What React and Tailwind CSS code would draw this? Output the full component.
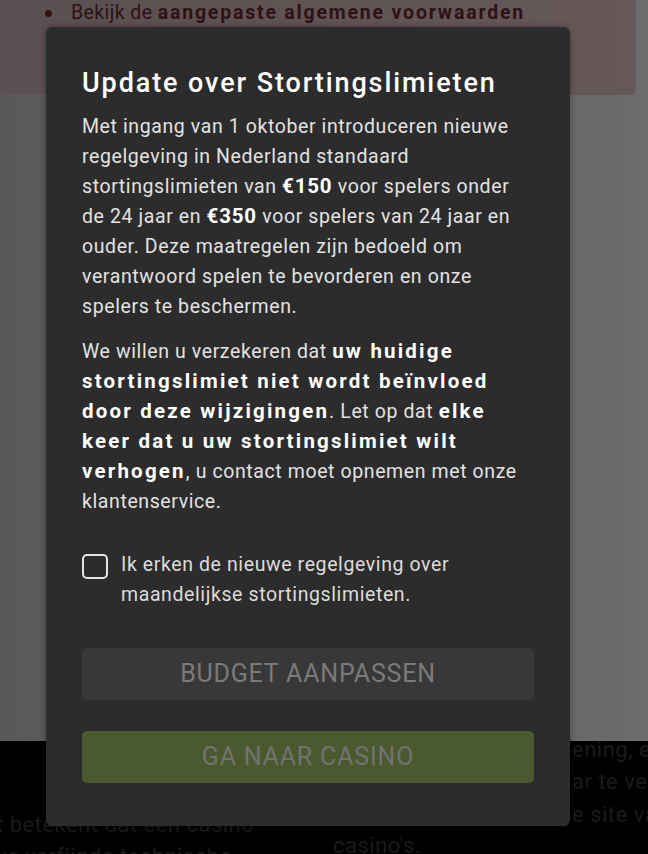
import { useState } from "react";

export default function App() {
  const [checked, setChecked] = useState(false);

  return (
    <div
      className="relative w-full h-[854px] overflow-hidden bg-[#5c5c5c]"
      style={{ fontFamily: "Roboto, 'Liberation Sans', sans-serif" }}
    >
      {/* dimmed page behind the modal */}
      <div className="flex flex-col h-full">
        <div className="h-[741px] bg-gradient-to-r from-[#595959] via-[#5e5e5e] to-[#6c6c6c]">
          <div className="w-[636px] h-[95px] bg-gradient-to-r from-[#5a4f50] to-[#665859] rounded-b-md border-r border-b border-[#6a5758]">
            <ul className="pl-[45px] pt-[1px]">
              <li className="flex items-center gap-[19px] text-[19.5px] leading-[24px] tracking-[0.4px] text-[#2e1216]">
                <span className="w-[7px] h-[7px] rounded-full bg-[#2e1216]" />
                <span>
                  Bekijk de{" "}
                  <b className="font-bold tracking-[1.8px]">
                    aangepaste algemene voorwaarden
                  </b>
                </span>
              </li>
            </ul>
          </div>
        </div>
        <div className="flex-1 bg-black text-[#1a1a1a] text-[22px] leading-[32px] tracking-[0.5px] relative">
          <div className="absolute left-[572px] top-[-7px] whitespace-nowrap">
            <p>ening, e</p>
            <p>ar te ve</p>
            <p className="mt-[1px]">e site va</p>
          </div>
          <div className="absolute left-[-4px] top-[68px] whitespace-nowrap">
            <p>t betekent dat een casino</p>
            <p>ve verfijnde technische</p>
          </div>
          <p className="absolute left-[333px] top-[89px]">casino's.</p>
        </div>
      </div>

      {/* modal */}
      <div className="absolute left-[46px] top-[27px] w-[524px] h-[799px] bg-[#2c2c2c] rounded-md shadow-[0_0_6px_rgba(0,0,0,0.35)] px-[36px] pt-[38px]">
        <h2 className="text-[27px] leading-[36px] font-medium tracking-[1.9px] text-white whitespace-nowrap">
          Update over Stortingslimieten
        </h2>
        <p className="mt-[11px] text-[19.5px] leading-[30px] tracking-[0.6px] text-[#e2e2e2] whitespace-nowrap">
          Met ingang van 1 oktober introduceren nieuwe
          <br />
          regelgeving in Nederland standaard
          <br />
          stortingslimieten van{" "}
          <b className="text-white font-bold text-[20.5px] leading-[20px] tracking-[0.8px]">
            €150
          </b>{" "}
          voor spelers onder
          <br />
          de 24 jaar en{" "}
          <b className="text-white font-bold text-[20.5px] leading-[20px] tracking-[0.8px]">
            €350
          </b>{" "}
          voor spelers van 24 jaar en
          <br />
          ouder. Deze maatregelen zijn bedoeld om
          <br />
          verantwoord spelen te bevorderen en onze
          <br />
          spelers te beschermen.
        </p>
        <p className="mt-[15px] text-[19.5px] leading-[30px] tracking-[0.6px] text-[#e2e2e2] whitespace-nowrap">
          We willen u verzekeren dat{" "}
          <b className="text-white font-bold text-[20.5px] leading-[20px] tracking-[2.2px]">
            uw huidige
          </b>
          <br />
          <b className="text-white font-bold text-[20.5px] leading-[20px] tracking-[2.2px]">
            stortingslimiet niet wordt beïnvloed
          </b>
          <br />
          <b className="text-white font-bold text-[20.5px] leading-[20px] tracking-[2.2px]">
            door deze wijzigingen
          </b>
          . Let op dat{" "}
          <b className="text-white font-bold text-[20.5px] leading-[20px] tracking-[2.2px]">
            elke
          </b>
          <br />
          <b className="text-white font-bold text-[20.5px] leading-[20px] tracking-[2.2px]">
            keer dat u uw stortingslimiet wilt
          </b>
          <br />
          <b className="text-white font-bold text-[20.5px] leading-[20px] tracking-[2.2px]">
            verhogen
          </b>
          , u contact moet opnemen met onze
          <br />
          klantenservice.
        </p>

        <label className="mt-[33px] flex items-start gap-[13px] cursor-pointer">
          <button
            type="button"
            onClick={() => setChecked(!checked)}
            className="mt-[4px] w-[26px] h-[25px] shrink-0 rounded-[5px] border-2 border-[#e6e6e6] flex items-center justify-center"
          >
            {checked && (
              <svg width="16" height="16" viewBox="0 0 16 16" fill="none">
                <path d="M3 8.5l3 3 7-7" stroke="#fff" strokeWidth="2" />
              </svg>
            )}
          </button>
          <span className="text-[19.5px] leading-[30px] tracking-[0.6px] text-[#dcdcdc] whitespace-nowrap">
            Ik erken de nieuwe regelgeving over
            <br />
            maandelijkse stortingslimieten.
          </span>
        </label>

        <div className="mt-[38px] flex flex-col gap-[31px]">
          <button
            type="button"
            className="h-[52px] w-full rounded-[5px] bg-[#383838] text-[#7a7a7a] text-[25px] tracking-[0.8px]"
          >
            BUDGET AANPASSEN
          </button>
          <button
            type="button"
            className="h-[52px] w-full rounded-[5px] bg-[#4b5a2e] text-[#727272] text-[25px] tracking-[0.8px]"
          >
            GA NAAR CASINO
          </button>
        </div>
      </div>
    </div>
  );
}
